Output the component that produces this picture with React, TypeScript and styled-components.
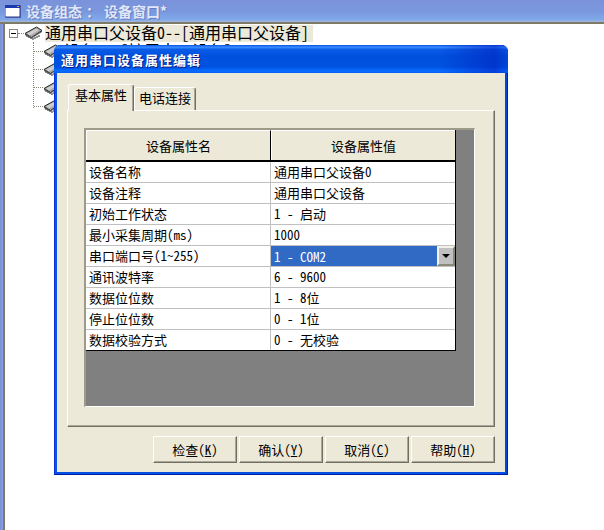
import styled, { createGlobalStyle } from "styled-components"

const fontStack = `"Noto Sans Mono CJK SC", "Noto Sans CJK SC", "Liberation Mono", monospace`

const GlobalStyle = createGlobalStyle`
  html, body {
    margin: 0;
    padding: 0;
    background: #fff;
    overflow: hidden;
  }
  body {
    font-family: ${fontStack};
    font-size: 13px;
    color: #000;
  }
`

const Page = styled.div`
  position: relative;
  width: 604px;
  height: 530px;
  display: flex;
  flex-direction: column;
  overflow: hidden;
`

const TopBar = styled.div`
  height: 22px;
  display: flex;
  align-items: center;
  gap: 5px;
  padding-left: 5px;
  background: linear-gradient(180deg, #7a92da 0%, #7a98de 55%, #80aaea 90%, #a8b4d8 100%);
  border-bottom: 2px solid #7d7a68;
  flex: none;
`

const TopTitle = styled.span`
  color: #e0e7f8;
  font-size: 14px;
  font-weight: 700;
  line-height: 22px;
  white-space: pre;
  word-spacing: -3px;
  text-shadow: 1px 1px 0 #6a7cc0;
`

const Body = styled.div`
  flex: 1;
  display: flex;
`

const SideStrip = styled.div`
  width: 3px;
  background: linear-gradient(90deg, #7a92da, #8b9fe2);
  border-right: 2px solid #7d7a68;
  flex: none;
`

const Tree = styled.div`
  flex: 1;
  padding: 0 0 0 4px;
`

const RootRow = styled.div`
  display: flex;
  align-items: center;
  height: 18px;
`

const Expander = styled.span`
  width: 7px;
  height: 7px;
  border: 1px solid #8a8a7c;
  background: #fff;
  position: relative;
  flex: none;
  &::after {
    content: "";
    position: absolute;
    left: 1px;
    top: 3px;
    width: 5px;
    height: 1px;
    background: #000;
  }
`

const RootDots = styled.span`
  width: 6px;
  border-top: 1px dotted #8a8a7c;
  flex: none;
`

const NodeLabel = styled.span<{ $selected?: boolean }>`
  font-size: 16px;
  line-height: 15px;
  height: 17px;
  padding-right: 4px;
  margin-left: 2px;
  white-space: pre;
  background: ${(p) => (p.$selected ? "#ece9d8" : "transparent")};
`

const ChildList = styled.div`
  margin-left: 24px;
  border-left: 1px dotted #8a8a7c;
  height: 66px;
  display: flex;
  flex-direction: column;
`

const ChildRow = styled.div`
  display: flex;
  align-items: center;
  height: 18.3px;
  flex: none;
`

const ChildDots = styled.span`
  width: 9px;
  border-top: 1px dotted #8a8a7c;
  flex: none;
`

const Dialog = styled.div`
  position: absolute;
  left: 54px;
  top: 45px;
  width: 454px;
  height: 430px;
  box-sizing: border-box;
  display: flex;
  flex-direction: column;
  border-radius: 7px 7px 0 0;
  background: #0845dd;
  border-left: 1px solid #0831d9;
  border-right: 1px solid #001ea0;
  border-bottom: 1px solid #001ea0;
  box-shadow: inset 2px 0 0 #0855e6, inset -2px 0 0 #0048d8, inset 0 -2px 0 #0450e2;
`

const DialogTitle = styled.div`
  height: 28px;
  flex: none;
  display: flex;
  align-items: center;
  padding-left: 7px;
  color: #fff;
  font-size: 13px;
  font-weight: 700;
  letter-spacing: 1px;
  text-shadow: 1px 1px 0 #0a1a80;
  border-radius: 6px 6px 0 0;
  margin-left: -1px;
  margin-right: -1px;
  background:
    linear-gradient(90deg, transparent 85%, rgba(0, 30, 190, 0.55) 97%, rgba(0, 30, 190, 0.2) 100%),
    linear-gradient(180deg, #0a52e2 0%, #3a8cff 8%, #0a5ce8 16%, #0050dc 40%, #0052e0 78%, #0a6cff 92%, #0462f4 100%);
`

const Client = styled.div`
  flex: 1;
  margin: 0 2px 2px 2px;
  background: #ece9d8;
  display: flex;
  flex-direction: column;
  padding: 11px 10px 9px 10px;
  min-height: 0;
`

const TabStrip = styled.div`
  height: 26px;
  display: flex;
  align-items: flex-end;
  padding-left: 1px;
  flex: none;
`

const Tab = styled.div<{ $active?: boolean }>`
  box-sizing: border-box;
  display: flex;
  align-items: center;
  justify-content: center;
  height: ${(p) => (p.$active ? "27px" : "23px")};
  width: ${(p) => (p.$active ? "66px" : "62px")};
  margin-bottom: ${(p) => (p.$active ? "-1px" : "0")};
  padding-bottom: ${(p) => (p.$active ? "7px" : "4px")};
  background: #ece9d8;
  border-top: 1px solid #fff;
  border-left: 1px solid #fff;
  border-right: 1px solid #716f64;
  box-shadow: inset -1px 0 0 #aca899;
  border-radius: 3px 3px 0 0;
  font-size: 13px;
  position: relative;
  z-index: ${(p) => (p.$active ? 1 : 0)};
`

const TabPanel = styled.div`
  flex: 1;
  box-sizing: border-box;
  border-top: 1px solid #fff;
  border-left: 1px solid #fff;
  border-right: 1px solid #716f64;
  border-bottom: 1px solid #716f64;
  box-shadow: inset -1px -1px 0 #aca899;
  padding: 17px 19px 19px 16px;
  display: flex;
  min-height: 0;
`

const GridFrame = styled.div`
  flex: 1;
  box-sizing: border-box;
  background: #808080;
  border-top: 2px solid #9d9a88;
  border-left: 2px solid #9d9a88;
  border-right: 1px solid #fff;
  border-bottom: 1px solid #fff;
  min-height: 0;
`

const Grid = styled.div`
  width: 370px;
  box-sizing: border-box;
  border-right: 1px solid #000;
  border-bottom: 1px solid #000;
  background: #fff;
`

const HeaderRow = styled.div`
  display: grid;
  grid-template-columns: 185px 184px;
  height: 32px;
  box-sizing: border-box;
  border-bottom: 2px solid #000;
  background: #ece9d8;
`

const HeaderCell = styled.div`
  display: flex;
  align-items: center;
  justify-content: center;
  padding-bottom: 1px;
  border-right: 1px solid #000;
  border-top: 1px solid #fff;
  border-left: 1px solid #fff;
  font-size: 13px;
  &:last-child {
    border-right: none;
  }
`

const Row = styled.div`
  display: grid;
  grid-template-columns: 185px 184px;
  height: 21px;
  box-sizing: border-box;
  border-bottom: 1px solid #c0c0c0;
  &:last-child {
    border-bottom: none;
    height: 20px;
  }
`

const Cell = styled.div<{ $selected?: boolean }>`
  display: flex;
  align-items: center;
  justify-content: space-between;
  padding-left: 3px;
  padding-bottom: ${(p) => (p.$selected ? "0" : "1px")};
  border-right: 1px solid #c0c0c0;
  white-space: pre;
  font-size: 13px;
  background: ${(p) => (p.$selected ? "#316ac5" : "#fff")};
  color: ${(p) => (p.$selected ? "#fff" : "#000")};
  &:last-child {
    border-right: none;
  }
`

const ComboButton = styled.span`
  width: 18px;
  height: 20px;
  box-sizing: border-box;
  flex: none;
  display: flex;
  align-items: center;
  justify-content: center;
  background: #c0c0c0;
  border-top: 2px solid #f4f2e8;
  border-left: 2px solid #f4f2e8;
  border-right: 2px solid #8a8878;
  border-bottom: 2px solid #8a8878;
`

const Arrow = styled.span`
  width: 0;
  height: 0;
  border-left: 4px solid transparent;
  border-right: 4px solid transparent;
  border-top: 4px solid #000;
`

const ButtonRow = styled.div`
  display: flex;
  justify-content: flex-end;
  gap: 2px;
  margin-top: 9px;
  flex: none;
`

const ActionButton = styled.div`
  width: 84px;
  height: 27px;
  box-sizing: border-box;
  display: flex;
  align-items: center;
  justify-content: center;
  padding-bottom: 1px;
  white-space: pre;
  font-size: 13px;
  background: #ece9d8;
  border-top: 1px solid #fff;
  border-left: 1px solid #fff;
  border-right: 1px solid #716f64;
  border-bottom: 1px solid #716f64;
  box-shadow: inset -1px -1px 0 #aca899;
`

const Hotkey = styled.span`
  text-decoration: underline;
`

const ChipIcon = () => (
  <svg width="19" height="14" viewBox="0 0 19 14" style={{ flex: "none", display: "block" }}>
    <path d="M5 10v2M7 11v2M9 12v2M11 11v2M13 10v2M15 9v2M3 9v2" stroke="#222" strokeWidth="1" />
    <path d="M1 7.5 12.5 1 18 4.5 7.5 11.5Z" fill="#a9a9a9" stroke="#222" strokeWidth="1" />
    <path d="M3 7.5 12.5 2.5 15 4 6 9.5Z" fill="#cfcfcf" />
    <path d="M1 7.5v1.5l6.5 3.5L18 6V4.5L7.5 11.5Z" fill="#555" />
  </svg>
)

const WindowIcon = () => (
  <svg width="16" height="13" viewBox="0 0 16 13" style={{ flex: "none", display: "block" }}>
    <rect x="1" y="1" width="15" height="12" fill="#5a6db0" />
    <rect x="0" y="0" width="15" height="12" fill="#fff" stroke="#2a3a90" strokeWidth="1" />
    <rect x="0" y="0" width="15" height="3" fill="#1c3bb0" />
    <rect x="12" y="1" width="2" height="1" fill="#f0a040" />
  </svg>
)

const rows = [
  ["设备名称", "通用串口父设备0"],
  ["设备注释", "通用串口父设备"],
  ["初始工作状态", "1 - 启动"],
  ["最小采集周期(ms)", "1000"],
  ["串口端口号(1~255)", "1 - COM2"],
  ["通讯波特率", "6 - 9600"],
  ["数据位位数", "1 - 8位"],
  ["停止位位数", "0 - 1位"],
  ["数据校验方式", "0 - 无校验"],
]

const buttons = [
  ["检查", "K"],
  ["确认", "Y"],
  ["取消", "C"],
  ["帮助", "H"],
]

const App = () => {
  return (
    <Page>
      <GlobalStyle />
      <TopBar>
        <WindowIcon />
        <TopTitle>设备组态 ： 设备窗口*</TopTitle>
      </TopBar>
      <Body>
        <SideStrip />
        <Tree>
          <RootRow>
            <Expander />
            <RootDots />
            <ChipIcon />
            <NodeLabel $selected>通用串口父设备0--[通用串口父设备]</NodeLabel>
          </RootRow>
          <ChildList>
            {[0, 1, 2, 3].map((i) => (
              <ChildRow key={i}>
                <ChildDots />
                <ChipIcon />
                <NodeLabel>设备{i}--[扩展串口设备]</NodeLabel>
              </ChildRow>
            ))}
          </ChildList>
        </Tree>
      </Body>

      <Dialog>
        <DialogTitle>通用串口设备属性编辑</DialogTitle>
        <Client>
          <TabStrip>
            <Tab $active>基本属性</Tab>
            <Tab>电话连接</Tab>
          </TabStrip>
          <TabPanel>
            <GridFrame>
              <Grid>
                <HeaderRow>
                  <HeaderCell>设备属性名</HeaderCell>
                  <HeaderCell>设备属性值</HeaderCell>
                </HeaderRow>
                {rows.map(([name, value], i) => (
                  <Row key={name}>
                    <Cell>{name}</Cell>
                    <Cell $selected={i === 4}>
                      {value}
                      {i === 4 && (
                        <ComboButton>
                          <Arrow />
                        </ComboButton>
                      )}
                    </Cell>
                  </Row>
                ))}
              </Grid>
            </GridFrame>
          </TabPanel>
          <ButtonRow>
            {buttons.map(([label, key]) => (
              <ActionButton key={key}>
                {label}(<Hotkey>{key}</Hotkey>)
              </ActionButton>
            ))}
          </ButtonRow>
        </Client>
      </Dialog>
    </Page>
  )
}

export default App
